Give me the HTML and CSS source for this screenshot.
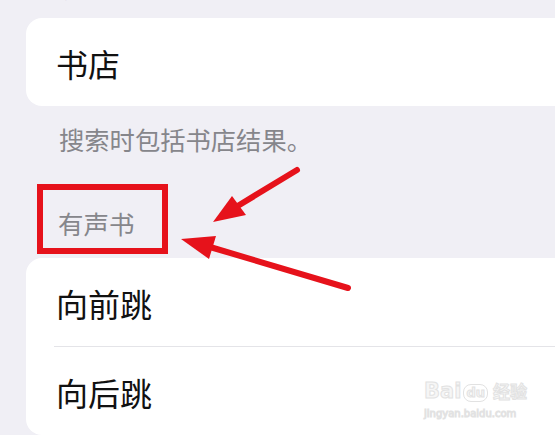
FILE: index.html
```html
<!DOCTYPE html>
<html lang="zh-CN">
<head>
  <meta charset="UTF-8">
  <title>有声书设置</title>
  <link rel="stylesheet" href="styles.css">
</head>
<body>
  <div id="pagina">
    <div class="intestazione tagliata">搜索</div>

    <div class="scheda primo">
      <div class="riga">书店</div>
    </div>
    <div class="nota">搜索时包括书店结果。</div>

    <div class="intestazione">有声书</div>
    <div class="scheda secondo">
      <div class="riga">向前跳</div>
      <div class="separatore"></div>
      <div class="riga">向后跳</div>
    </div>

    <div id="riquadro"></div>
    <svg id="frecce" width="555" height="435" viewBox="0 0 555 435">
      <line x1="297" y1="170" x2="236" y2="207" />
      <polygon points="213,222 232,196 246,215" />
      <line x1="348" y1="288" x2="210" y2="247" />
      <polygon points="181,239 216,236 209,259" />
    </svg>

    <div id="filigrana">
      <div class="logo"><span>Bai</span><span class="zampa">du</span><span class="jy">经验</span></div>
      <div class="url">jingyan.baidu.com</div>
    </div>
  </div>
</body>
</html>
```

FILE: styles.css
```css
html, body {
  margin: 0;
  padding: 0;
  height: 100vh;
  background-color: #f0eff5;
  overflow: hidden;
  font-family: "Noto Sans CJK SC", "Noto Sans", sans-serif;
}

#pagina {
  position: relative;
  display: flow-root;
  height: 435px;
  padding-left: 26px;
}

.intestazione {
  margin: 54px 0 0 32px;
  font-size: 25.5px;
  line-height: 30px;
  color: #86868b;
}

/* intestazione della sezione sopra, quasi fuori schermo */
.intestazione.tagliata {
  margin-top: -28px;
  margin-left: 31px;
  height: 28px;
  color: #a8a8ad;
}

.scheda {
  background: #fff;
  border-radius: 16px;
  margin-right: -40px;
}

.scheda.primo { margin-top: 18px; }
.scheda.secondo { margin-top: 20px; }

.riga {
  height: 88px;
  padding-left: 30px;
  padding-top: 2px;
  box-sizing: border-box;
  display: flex;
  align-items: center;
  font-size: 32px;
  color: #111;
}

.separatore {
  height: 1px;
  margin-left: 28px;
  background: #e4e4e8;
}

.nota {
  margin: 18px 0 0 33px;
  font-size: 25.3px;
  line-height: 30px;
  color: #86868b;
}

#riquadro {
  position: absolute;
  left: 37px;
  top: 184px;
  width: 119px;
  height: 58px;
  border: 6px solid #e6121b;
}

#frecce {
  position: absolute;
  left: 0;
  top: 0;
  pointer-events: none;
}

#frecce line {
  stroke: #e6121b;
  stroke-width: 6;
  stroke-linecap: round;
}

#frecce polygon {
  fill: #e6121b;
}

#filigrana {
  position: absolute;
  left: 424px;
  top: 376px;
  color: #f6f6f6;
  -webkit-text-stroke: 1px #e2e2e2;
  font-family: "DejaVu Sans", sans-serif;
}

.logo {
  display: flex;
  align-items: flex-end;
  font-size: 21px;
  font-weight: bold;
  line-height: 30px;
}

.zampa {
  font-size: 13px;
  line-height: 16px;
  margin: 0 3px 4px 2px;
  padding: 0 2px;
  border: 1px solid #e2e2e2;
  border-radius: 8px;
}

.jy {
  font-family: "Noto Sans CJK SC", sans-serif;
  font-size: 17px;
  margin-left: 2px;
}

.url {
  font-size: 10px;
  line-height: 12px;
  margin-top: 2px;
}
```
